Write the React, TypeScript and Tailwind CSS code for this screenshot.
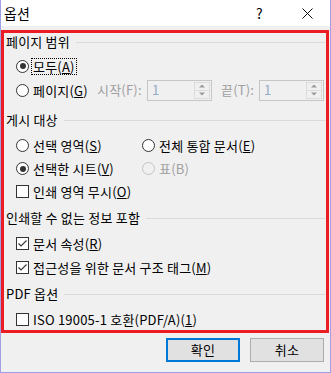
import type { ReactNode } from 'react';

function Radio({ checked, disabled }: { checked?: boolean; disabled?: boolean }) {
  return (
    <span
      className={`w-[13px] h-[13px] rounded-full border flex items-center justify-center shrink-0 ${
        disabled ? 'border-[#c4c4c4] bg-[#f0f0f0]' : 'border-[#333333] bg-white'
      }`}
    >
      {checked && <span className="w-[6px] h-[6px] rounded-full bg-[#333333]" />}
    </span>
  );
}

function Checkbox({ checked }: { checked?: boolean }) {
  return (
    <span className="w-[13px] h-[13px] border border-[#333333] bg-white flex items-center justify-center shrink-0">
      {checked && (
        <svg width="11" height="11" viewBox="0 0 11 11">
          <path d="M1.5 5.5 L4 8 L9.5 2.5" fill="none" stroke="#333333" strokeWidth="1.1" />
        </svg>
      )}
    </span>
  );
}

function Header({ title }: { title: string }) {
  return (
    <div className="h-[24px] flex items-center gap-[6px]">
      <span>{title}</span>
      <div className="flex-1 h-px bg-[#dadada]" />
    </div>
  );
}

function Option({
  control,
  children,
  className = '',
  focused,
}: {
  control: ReactNode;
  children: ReactNode;
  className?: string;
  focused?: boolean;
}) {
  return (
    <div className={`flex items-center gap-[3px] ${className}`}>
      {control}
      <span
        className={`px-px leading-[15px] ${
          focused ? 'outline outline-1 outline-dotted outline-black' : ''
        }`}
      >
        {children}
      </span>
    </div>
  );
}

function Spin() {
  return (
    <div className="w-[65px] h-[21px] border border-[#c6c6c6] bg-[#f0f0f0] flex items-center">
      <span className="flex-1 pl-[4px] text-[#93a9c4]">1</span>
      <div className="w-[16px] h-[17px] mr-px flex flex-col">
        <div className="flex-1 border border-[#dcdcdc] flex items-center justify-center">
          <svg width="6" height="4" viewBox="0 0 6 4">
            <path d="M0 3.5 L3 0.5 L6 3.5 Z" fill="#9a9a9a" />
          </svg>
        </div>
        <div className="flex-1 border border-t-0 border-[#dcdcdc] flex items-center justify-center">
          <svg width="6" height="4" viewBox="0 0 6 4">
            <path d="M0 0.5 L3 3.5 L6 0.5 Z" fill="#9a9a9a" />
          </svg>
        </div>
      </div>
    </div>
  );
}

export default function App() {
  return (
    <div className="relative w-[331px] h-[373px] bg-[#f0f0f0] border-x border-b border-[#a39fe6] text-[13px] tracking-[0.2px] text-black font-['Malgun_Gothic','Noto_Sans_CJK_KR',sans-serif] overflow-hidden">
      <div className="h-[26px] bg-white flex items-center pl-[3px]">
        <span className="text-[14px] flex-1">옵션</span>
        <span className="text-[14px] w-[10px] mr-[36px]">?</span>
        <svg width="11" height="11" viewBox="0 0 11 11" className="mr-[17px]">
          <path d="M0.5 0.5 L10.5 10.5 M10.5 0.5 L0.5 10.5" stroke="#111111" strokeWidth="1" />
        </svg>
      </div>

      <div className="px-[5px] pt-[4px]">
        <Header title="페이지 범위" />
        <div className="pl-[10px]">
          <div className="h-[24px] flex items-center">
            <Option control={<Radio checked />} focused>
              모두(<u>A</u>)
            </Option>
          </div>
          <div className="h-[24px] flex items-center">
            <Option control={<Radio />} className="w-[81px]">
              페이지(<u>G</u>)
            </Option>
            <span className="w-[50px] text-[#a0a0a0]">시작(F):</span>
            <Spin />
            <span className="ml-[9px] w-[38px] text-[#a0a0a0]">끝(T):</span>
            <Spin />
          </div>
        </div>

        <div className="mt-[6px]">
          <Header title="게시 대상" />
        </div>
        <div className="pl-[10px] mt-[2px]">
          <div className="h-[23px] flex items-center">
            <Option control={<Radio />} className="w-[126px]">
              선택 영역(<u>S</u>)
            </Option>
            <Option control={<Radio />}>
              전체 통합 문서(<u>E</u>)
            </Option>
          </div>
          <div className="h-[23px] flex items-center">
            <Option control={<Radio checked />} className="w-[126px]">
              선택한 시트(<u>V</u>)
            </Option>
            <Option control={<Radio disabled />}>
              <span className="text-[#a0a0a0]">표(B)</span>
            </Option>
          </div>
          <div className="h-[23px] flex items-center">
            <Option control={<Checkbox />}>
              인쇄 영역 무시(<u>O</u>)
            </Option>
          </div>
        </div>

        <div className="mt-[3px]">
          <Header title="인쇄할 수 없는 정보 포함" />
        </div>
        <div className="pl-[10px] mt-px">
          <div className="h-[24px] flex items-center">
            <Option control={<Checkbox checked />}>
              문서 속성(<u>R</u>)
            </Option>
          </div>
          <div className="h-[24px] flex items-center">
            <Option control={<Checkbox checked />}>
              접근성을 위한 문서 구조 태그(<u>M</u>)
            </Option>
          </div>
        </div>

        <div className="mt-[3px]">
          <Header title="PDF 옵션" />
        </div>
        <div className="pl-[10px] mt-px">
          <div className="h-[24px] flex items-center">
            <Option control={<Checkbox />}>
              ISO 19005-1 호환(PDF/A)(<u>1</u>)
            </Option>
          </div>
        </div>

        <div className="mt-[7px] flex justify-end gap-[10px] pr-[1px]">
          <button className="w-[74px] h-[24px] border-2 border-[#0078d7] bg-[#e1e1e1]">확인</button>
          <button className="w-[74px] h-[24px] border border-[#adadad] bg-[#e1e1e1]">취소</button>
        </div>
      </div>

      <div className="absolute left-0 top-[30px] w-[328px] h-[303px] border-[3px] border-[#ec1c24] pointer-events-none" />
    </div>
  );
}
